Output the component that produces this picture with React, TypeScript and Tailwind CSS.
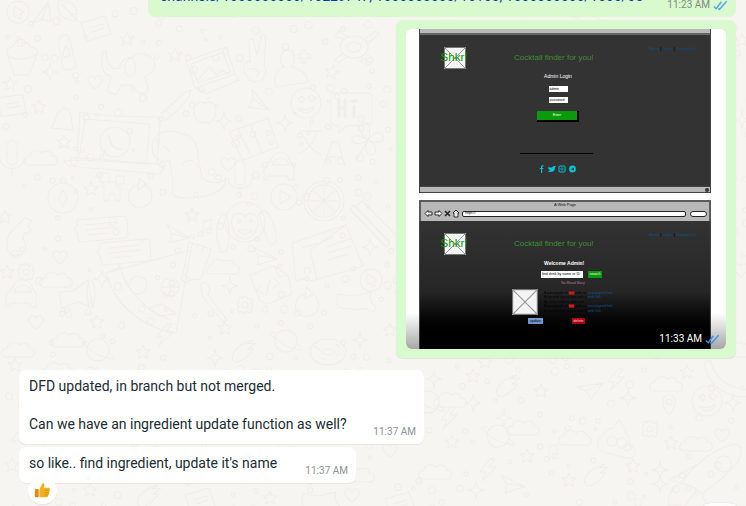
import type { ReactNode } from 'react'

// one doodle per wallpaper motif, drawn around 0,0
const D: Record<string, ReactNode> = {
  star: <path d="M0-7 2-2.2 7-2 3 1.2 4.4 6.2 0 3.4-4.4 6.2-3 1.2-7-2-2-2.2Z" />,
  spark: <path d="M0-9C1-2 2-1 8 0 2 1 1 2 0 9-1 2-2 1-8 0-2-1-1-2 0-9Z" />,
  cloud: <path d="M-14 7C-20 7-20-1-13-2-12-8-4-9-1-5 3-9 10-6 9-2 16-2 16 7 10 7Z" />,
  heart: <path d="M0 7C-10 0-8-7-3-6-1-6 0-4 0-3 0-4 1-6 3-6 8-7 10 0 0 7Z" />,
  send: <path d="M-13-3 13-7 1 9-4 1ZM-4 1 13-7" />,
  bolt: <path d="M2-11-8 2-2 2-6 11 8-3 1-3 7-11Z" />,
  music: <path d="M-3 6V-6L5-9V3M-3 6A2.5 2.5 0 1 1-8 6 2.5 2.5 0 0 1-3 6ZM5 3A2.5 2.5 0 1 1 0 3 2.5 2.5 0 0 1 5 3Z" />,
  chat: <path d="M-25-9 21-13Q25-13 25-9L26 5Q26 9 22 9L-20 13Q-24 13-24 9L-25 3-28 0-25-3ZM-17-4 15-7M-16 1 16-2M-15 6 8 4" />,
  card: <path d="M-15-5 9-12 15 6-9 13ZM-6 0 7-4M-4 4 8 0" />,
  gear: <path d="M-2-8H2L3-5 6-7 8-4 6-2 8 0V2L6 3 7 6 4 8 2 6 0 8H-2L-3 6-6 7-8 4-6 2-8 0-8-2-6-3-7-6-4-8-2-6ZM3 0A3 3 0 1 1-3 0 3 3 0 0 1 3 0Z" />,
  planet: <g><circle r="11" /><path d="M-11-3C-19-8-17-11-11-8M11 3C19 8 17 11 11 8M-11-3C-4 5 4 7 11 8" /></g>,
  comet: <path d="M-12 10C-15 3-5-7 8-10L2-6 11-7 3-1 9-1C2 8-8 15-12 10Z" />,
  pin: <path d="M0 11C-9 1-8-9 0-9 8-9 9 1 0 11ZM3-2A3 3 0 1 1-3-2 3 3 0 0 1 3-2Z" />,
  smile: <g><circle r="15" /><path d="M-8-4-4-7-1-4-4 0ZM2-5 6-8 10-5 6-1ZM-7 5C-2 8 4 7 8 3 7 11-5 12-7 5Z" /></g>,
  play: <g><circle r="13" /><path d="M-4-7 7 0-4 7Z" /></g>,
  cursor: <g><circle r="11" /><path d="M-4-6 6 0 2 2 4 6 1 7-1 3-4 5Z" /></g>,
  leaf: <path d="M-10-9C5-11 12-2 7 11-6 10-12 2-10-9ZM-7-6 11 12M-2-1V-7M3 4H9" />,
  cupcake: <path d="M-14 0-8 19H7L15-2C17-6 12-10 8-9 7-14 2-14 0-12-1-19-3-20-4-20-3-14-8-13-10-9-15-9-16-3-14 0ZM-14 0C-5 5 6 4 15-2" />,
  bottle: <path d="M-7-9-3-15 2-15 5-10 11 17Q5 21-2 19ZM1-4C6 3 5 7 1 7-3 7-3 3 1-4Z" />,
  dog: <path d="M-27-22C-30-8-27 3-19 3L-22 16Q-22 22-13 21L-9 12H2L8 20Q20 21 18 15L15 3C22 1 27-6 24-12 18-20 8-22 2-15-4-18-10-10-11-5-16-3-23-4-24-22ZM0-15C-8-10-6 4 0 3 8 1 6-14 0-15Z" />,
  photo: <g><path d="M-24-6 16-20 25 7-15 21Z" /><path d="M-19-3 13-15 20 5-12 16ZM-12 13-1 0 7 8 12 3 19 7M9-9A3 3 0 1 1 3-9 3 3 0 0 1 9-9Z" /><path d="M-14 21-4 27 29 13 25 7" /></g>,
  peace: <path d="M-9 2-10-18C-10-23-5-22-5-18L-2-5 2-23C3-27 7-26 7-22L5 5C9 12 5 22-3 22-10 22-15 15-15 7-15 2-10 0-9 2ZM-9 9C-5 8-2 9 0 12-1 15-2 16-2 17" />,
  person: <path d="M-12 19C-16 5-8-1-3-1-10-5-8-18 0-18 8-18 8-5 3-1 10 0 20 5 20 14ZM11-14H14V-18H18V-14H23V-10H18V-5H14V-10H11Z" />,
  turtle: <g><ellipse rx="14" ry="11" /><ellipse rx="7" ry="5" /><path d="M12-9 22-16 25-13 14-4M12 7 20 12 17 16 7 10M-12 7-19 12-16 16-6 10M-11-8-19-11-15-16-6-10" /></g>,
  hi: <g><path d="M-21-15 15-15Q20-15 20-10V12Q20 17 15 17L-6 18-13 25-13 18Q-21 18-21 12Z" /><path d="M-13-8V9M-7-8V9M-13 0H-7M2-2V9M-1-7H5" strokeWidth="3" /></g>,
  pencil: <path d="M-15 9-5 0 9-13 15-15 13-8 2 5-10 15ZM-11 4-6 10" />,
  apple: <path d="M0-6C-4-10-12-7-11 3-9 13-3 14 0 12 3 14 9 13 11 3 12-7 4-10 0-6ZM0-6C0-10 3-12 6-13" />,
  map: <path d="M-24-5 15-19 25 10-10 23-14 15ZM-15-8-3 17M-3-13 9 15M3-3A3 3 0 1 1-3-3 3 3 0 0 1 3-3Z" />,
  bell: <path d="M-11 8C-5 2-7-10 2-12 11-11 9 2 11 10ZM-11 8 11 10M2-12V-15" />,
  laptop: <g><path d="M-34-30-3-26 41-25Q47-25 46-18L43 22 M-34-30-37 18" /><path d="M-29-23 36-18 32 21-35 16Z" /><path d="M-50 19-37 18 43 22 50 25 46 32-46 24Z" /><circle cx="1" cy="0" r="15" /><path d="M-11 15-9 7" /><path d="M-5-6C-4 4 2 8 7 7" strokeWidth="2" /></g>,
  dino: <path d="M-18 32C-15 20-20 10-20 0-30 4-38-2-38-14-38-28-20-32-8-26 0-26 8-18 8-4L12 18C24 26 32 22 36 18 36 32 18 38-2 38-14 38-18 36-18 32ZM-26-14-20-8M-8 4C0-4 8 4 8 8" />,
  car: <path d="M-14 6C-16-3-8-4-6-10-3-17 8-17 11-10 13-4 18-3 16 6V12H11L9 8H-9L-11 12H-14ZM-6-3H11C9-12-2-12-6-3Z" />,
  xa: <path d="M-18-14H4M-8-20V-14M-2-14C-3-3-9 4-18 8M-14-8C-10 0-3 7 3 10M5 22 14-3 20-3 27 20M9 12H24" />,
  clover: <path d="M0 0C-8-6-12-16-4-17 2-18 3-10 0 0 5-8 12-10 15-4 18 2 8 4 0 0 8 3 10 12 4 15-2 17-4 8 0 0-6 4-14 6-16 0-18-5-8-6 0 0ZM0 0 -12 20" />,
  mic: <path d="M-5-16Q0-24 5-16V2Q0 8-5 2ZM-12-2C-12 12 12 12 12-2M0 8V17" />,
  compass: <g><circle r="15" /><path d="M-3-18H3M0-8 4 0 0 9-4 0Z" /><circle cy="-18" r="3" /></g>,
  puzzle: <path d="M-12-18H-3V-9H-12ZM4-15H12V-7H4ZM-9-9H4V-4H8V10H3V3H-3V10H-8V-3H-9Z" />,
  redo: <path d="M-1-10C-12-9-14 4-8 10-1 15 11 12 12 1 12-5 8-9 5-10M-1-17 6-11-2-5Z" />,
  citrus: <g><circle r="20" /><circle r="16" /><path d="M0-14V14M-14 0H14M-10-10 10 10M-10 10 10-10" /></g>,
  monkey: <g><circle r="20" /><path d="M-22-8C-30 0-30 16-24 30L-19 30C-14 20-16 0-19-8ZM19-12C26-8 32 8 31 20L26 24C20 14 17 2 14-8ZM-13-4C-10-10 -2-10 0-5 3-11 13-9 13-1 14 7 8 16 0 17-9 17-15 6-13-4ZM-7 9C-2 13 3 13 7 9-1 7-4 7-7 9Z" /><circle cx="-6" cy="-1" r="1.5" /><circle cx="6" cy="-1" r="1.5" /></g>,
  book: <g><path d="M-34-10 20-28 37 13-14 28-20 25-30 28ZM-9 26-16-3 20-28" /><path d="M-24-5-8-10M-2-12 8-16M0-6 24-14M1 0 26-7M3 7 21 1" /></g>,
  key: <path d="M-6-6 5-18 11-14 8-8 11-6 8-2 5-2 3 2 6 13C8 20-8 24-12 16-14 8-14 0-6-6Z" />,
  tube: <path d="M-8-21 14-14 4 16-6 17-14 11ZM-6-15-4-20M-1-14 1-19M5-12 7-17M-14 11-16 16-11 20-6 17" />,
  pizza: <g><path d="M-44-17C-36 14-8 38 26 43L41-40ZM-44-17-30-23C-25-4-8 20 20 30" /><circle cx="-12" cy="-5" r="9" /><circle cx="20" cy="-3" r="9" /><path d="M-2 18 12 14 26 24 10 26Z" /><path d="M12-3 28-3M20-11V5" /></g>,
  brush: <path d="M-13-18C-3-16-5-8-7-5L12 20 8 22-12-3C-12-3-15-12-13-18Z" />,
  code: <path d="M-18-10 6-19 20-10 24 9 0 19-8 16ZM6-19 12-8 20-10M-7 0-11 5-5 8M7-6 11-1 5 3M2-6-2 10" />,
  mega: <g><path d="M-16-8-2-9 13-20 18 8 3 2-13 8ZM-11 8-8 18-3 17-6 6" /><ellipse cx="16" cy="-6" rx="4" ry="14" /></g>,
  poop: <g><path d="M3-18C8-12 10-8 9-6 14-2 15 3 13 6 22 10 21 22 10 20L-12 14C-22 10-18-2-12-3-12-8-6-10-2-10-2-14 1-15 3-18Z" /><circle cx="-4" cy="3" r="5" /><circle cx="6" cy="5" r="5" /></g>,
  rocket: <path d="M-16 12C-2-8 18-22 36-26 46-26 44-14 38-6 30 4 18 14 4 24L-6 16-28 10 0-6M4 24 10 38M-16 12C-26 18-30 24-30 36-24 34-18 34-14 38-10 28-4 26-2 20M26-14A8 8 0 1 1 25-14" />,
  banana: <path d="M-20-20C-16-4-6 8 20 10 22 14 18 16 14 17-8 16-24 2-26-18Z" />,
  tie: <path d="M-16-6-2-4 16-8C14-2 16 4 20 6 22 10 18 13 14 10 8 6 0 12-8 8-14 10-22 6-16-6Z" />,
  wand: <path d="M-20-16-16-20 20 18 16 22ZM-12-20-8-24 26 10" />,
  donut: <g><ellipse rx="18" ry="13" /><ellipse rx="6" ry="3" /><path d="M-14-6-8-2M8-8 12-4M-6 6-2 8M8 4 12 2" /></g>,
}

const PLACED: [string, number, number, number?, number?][] = [
  ['cursor', 18, 12], ['send', 44, 16, -45], ['leaf', 68, 10], ['card', 96, 28], ['star', 127, 39],
  ['cupcake', 22, 56], ['bottle', 65, 50], ['dog', 130, 73], ['photo', 210, 67], ['peace', 259, 60],
  ['person', 288, 68], ['turtle', 354, 47], ['spark', 50, 72], ['star', 175, 55], ['star', 332, 72, 12],
  ['star', 10, 84], ['heart', 95, 82], ['card', 12, 105, 8], ['star', 39, 107], ['pencil', 176, 105],
  ['apple', 205, 110], ['send', 256, 102, 60], ['smile', 306, 103], ['hi', 352, 108], ['bell', 62, 120],
  ['laptop', 114, 142], ['dino', 190, 160], ['map', 253, 137], ['spark', 224, 121], ['spark', 285, 123],
  ['star', 64, 142], ['mic', 12, 160], ['cloud', 43, 158], ['heart', 228, 164], ['car', 278, 168],
  ['xa', 318, 145], ['clover', 368, 140], ['mic', 240, 180], ['compass', 63, 198], ['star', 91, 189],
  ['puzzle', 112, 191], ['redo', 140, 195], ['play', 284, 197], ['citrus', 324, 201], ['monkey', 245, 222],
  ['star', 192, 215], ['key', 20, 235], ['star', 5, 217], ['chat', 102, 229], ['chat', 125, 252],
  ['send', 175, 235, 40], ['music', 206, 228], ['book', 326, 253], ['wand', 370, 225], ['spark', 370, 247],
  ['heart', 60, 257], ['gear', 26, 272], ['star', 7, 272], ['tube', 197, 263], ['cloud', 225, 267],
  ['send', 262, 257, 35], ['cursor', 371, 280], ['cloud', 58, 280], ['spark', 102, 279], ['pizza', 150, 290],
  ['code', 268, 285], ['spark', 230, 286], ['car', 20, 295], ['mega', 75, 300], ['brush', 215, 300],
  ['gear', 245, 305], ['redo', 307, 304], ['tie', 355, 300], ['heart', 36, 322], ['star', 97, 322],
  ['star', 225, 328], ['cloud', 70, 340], ['bolt', 165, 335], ['planet', 286, 341], ['spark', 360, 340],
  ['donut', 328, 352], ['cloud', 20, 350], ['planet', 98, 350], ['star', 143, 352], ['spark', 215, 358],
  ['comet', 245, 350], ['star', 390, 330], ['star', 485, 362], ['comet', 509, 385], ['spark', 434, 379],
  ['star', 473, 376], ['star', 541, 391], ['send', 590, 390], ['bolt', 616, 380], ['spark', 628, 398],
  ['cloud', 668, 384], ['star', 687, 372], ['banana', 730, 380], ['planet', 428, 402], ['cloud', 452, 400],
  ['bolt', 449, 418], ['spark', 473, 403], ['spark', 504, 418], ['star', 452, 442], ['planet', 498, 436],
  ['cloud', 525, 428], ['cloud', 577, 438], ['poop', 616, 438], ['gear', 650, 429], ['pin', 669, 404],
  ['smile', 707, 401], ['spark', 733, 403], ['star', 671, 443], ['cloud', 698, 444], ['heart', 722, 435],
  ['music', 552, 453], ['star', 527, 456], ['cloud', 437, 472], ['bolt', 488, 470], ['send', 510, 485, 35],
  ['spark', 476, 490], ['star', 569, 480], ['comet', 597, 474], ['star', 633, 466], ['rocket', 698, 470],
  ['spark', 660, 470], ['spark', 660, 484], ['card', 400, 504], ['cloud', 60, 370], ['star', 412, 350],
  ['heart', 390, 450], ['cloud', 360, 475], ['banana', 385, 392], ['star', 15, 365], ['star', 12, 465],
  ['car', 30, 440, 40], ['comet', 150, 495], ['star', 270, 498], ['card', 200, 500], ['heart', 352, 495],
  ['tie', 320, 500], ['star', 90, 490], ['cloud', 745, 350], ['spark', 742, 120], ['star', 742, 40], ['heart', 741, 270],
]

// small dots filling the gaps between doodles
function dots() {
  const out: [number, number, number][] = []
  let seed = 7
  const rnd = () => (seed = (seed * 16807) % 2147483647) / 2147483647
  for (let y = 6; y < 506; y += 15) {
    for (let x = 6; x < 746; x += 15) {
      if (rnd() > 0.45) continue
      const px = x + rnd() * 11
      const py = y + rnd() * 11
      if (PLACED.some(([, dx, dy]) => Math.hypot(dx - px, dy - py) < 13)) continue
      out.push([px, py, 1.4 + rnd() * 2.4])
    }
  }
  return out
}

function Wallpaper() {
  return (
    <svg className="absolute inset-0" width="746" height="506" fill="none" stroke="#f0eeea" strokeWidth="1.1" strokeLinejoin="round" strokeLinecap="round">
      {dots().map(([x, y, r], i) => <circle key={i} cx={x} cy={y} r={r} />)}
      {PLACED.map(([name, x, y, rot], i) => (
        <g key={i} transform={`translate(${x} ${y}) rotate(${rot ?? 0})`}>{D[name]}</g>
      ))}
    </svg>
  )
}

function Checks({ className }: { className: string }) {
  return (
    <svg width="15" height="11" viewBox="0 0 16 11" fill="none" stroke="currentColor" strokeWidth="1.5" className={className}>
      <path d="M1 6.5 3.4 9 9 1.5M5.5 8.5 7 9.5 14.5 1" />
    </svg>
  )
}

function Broken({ className }: { className: string }) {
  return (
    <svg viewBox="0 0 22 22" className={className}>
      <rect x="0.5" y="0.5" width="21" height="21" fill="#f4f4f4" stroke="#777" />
      <path d="M0 0 22 22M22 0 0 22" stroke="#999" strokeWidth="1" />
    </svg>
  )
}

function Header({ top }: { top: string }) {
  return (
    <div className={`flex items-start ${top}`}>
      <div className="relative ml-[24px] flex h-[22px] w-[22px] shrink-0 items-center justify-center">
        <Broken className="absolute inset-0 h-[22px] w-[22px]" />
        <span className="relative -ml-[2px] shrink-0 whitespace-nowrap text-[11.5px] leading-none text-[#0a9a0a]">Shkr!</span>
      </div>
      <span className="ml-[48px] mt-[6px] w-[82px] whitespace-nowrap text-[8px] leading-[10px] text-[#3f8f35]">Cocktail finder for you!</span>
      <span className="ml-[53px] mt-[-1px] whitespace-nowrap text-[4px] leading-[6px] text-[#12508f]">Menu <b className="text-black">|</b> Order <b className="text-black">|</b> Contact Us</span>
    </div>
  )
}

function Chrome() {
  return (
    <div className="flex h-[21px] flex-col border-2 border-b-0 border-[#5b5b5b] bg-[#b8b8b8]">
      <span className="text-center text-[4px] leading-[6px] text-[#111]">A Web Page</span>
      <div className="flex items-center pl-[3px] pr-[2px] pt-[1px]">
        <svg width="37" height="9" viewBox="0 0 37 9" fill="#eee" stroke="#222" strokeWidth="0.9">
          <path d="M1 4.5 4 1.5V3H8V6H4V7.5ZM18 4.5 15 1.5V3H11V6H15V7.5Z" />
          <path d="M21 2 26 7M26 2 21 7" strokeWidth="1.5" />
          <path d="M29 4 32 1 35 4 34 4V8H30V4Z" />
        </svg>
        <div className="ml-[1px] flex h-[6px] w-[224px] items-center rounded-[2px] border border-[#222] bg-white pl-[2px] text-[3.5px] leading-none text-black">https://</div>
        <div className="ml-[4px] h-[6px] w-[17px] rounded-full border border-[#222] bg-white" />
      </div>
    </div>
  )
}

function Result() {
  return (
    <div className="mt-[3px] flex pl-[92px]">
      <Broken className="h-[26px] w-[26px] shrink-0" />
      <div className="ml-[6px] mt-[2px] whitespace-nowrap text-[3.6px] leading-[4.4px] text-black">
        <p>A paragraph of <span className="bg-[#a01010] text-[#e04040]">text</span> with an <span className="text-[#12508f]">unassigned link</span></p>
        <p>A second row of text with a <span className="text-[#12508f]">web link</span></p>
        <p>An icon ▪ inlines with text.</p>
        <p>A paragraph of <span className="bg-[#a01010] text-[#e04040]">text</span> with an <span className="text-[#12508f]">unassigned link</span></p>
        <p>A second row of text with a <span className="text-[#12508f]">web link</span></p>
      </div>
    </div>
  )
}

function ImageBubble() {
  return (
    <div className="mt-[3px] h-[338px] w-[340px] self-end rounded-[7px] bg-[#d9f9cf] p-[9px] pl-[10px] pr-[10px] shadow-[0_1px_1px_rgba(0,0,0,0.08)]">
      <div className="relative flex h-[320px] flex-col gap-[7px] overflow-hidden rounded-[6px] bg-white px-[13px] pr-[15px] font-['Liberation_Sans',sans-serif]">
        {/* first wireframe */}
        <div className="flex h-[164px] shrink-0 flex-col border-x border-[#444]">
          <div className="h-[6px] border-b-2 border-[#666] bg-[#b8b8b8]" />
          <div className="h-[151px] bg-[#333]">
            <Header top="pt-[12px]" />
            <div className="flex w-[276px] flex-col items-center">
              <span className="mt-[3px] text-[5px] leading-[8px] text-white">Admin Login</span>
              <div className="mt-[6px] h-[6px] w-[19px] bg-white pl-[1px] text-[3.5px] leading-[6px] text-black">admin</div>
              <div className="mt-[5px] h-[6px] w-[19px] bg-white pl-[1px] text-[3.5px] leading-[6px] text-black">password</div>
              <div className="mt-[8px] flex h-[11px] w-[42px] items-center justify-center border-b-2 border-r-2 border-black bg-[#0a9a0a] text-[3.5px] text-white">Enter</div>
              <div className="-ml-[3px] mt-[31px] h-px w-[73px] bg-black" />
              <div className="mt-[11px] flex items-center text-[#07c4d8]">
                <svg width="38" height="8" viewBox="0 0 38 8" fill="currentColor">
                  <path d="M2 8V4H0.8V3H2V1.8Q2 0 4.4 0V1.2Q3.2 1.2 3.2 2V3H4.4L4.2 4H3.2V8Z" />
                  <path d="M9 2Q12 3 13.5 2 14.5 0.5 16 1L17 1 16 2.5Q16 7 11 7 9.5 7 8.5 6 10 6 11 5.4 9 4.4 9 2Z" />
                  <rect x="20" y="1" width="6" height="6" rx="1" fill="none" stroke="currentColor" />
                  <circle cx="23" cy="4" r="1.2" fill="none" stroke="currentColor" strokeWidth="0.7" />
                  <circle cx="33.5" cy="4" r="3.4" />
                  <path d="M31.8 4 35.2 2.8 34.6 5.4Z" fill="#333" />
                </svg>
              </div>
            </div>
          </div>
          <div className="flex h-[7px] items-center justify-end border-y border-[#444] bg-[#b8b8b8] pr-[1px]">
            <span className="h-[4px] w-[4px] rounded-full bg-[#333]" />
          </div>
        </div>
        {/* second wireframe */}
        <div className="flex h-[149px] shrink-0 flex-col">
          <Chrome />
          <div className="flex-1 border-x border-[#444] bg-gradient-to-b from-[#333] via-[#262626] via-55% to-black to-95%">
            <Header top="pt-[12px]" />
            <div className="mt-[4px] pl-[124px] text-[5px] font-semibold leading-[8px] text-white">Welcome Admin!</div>
            <div className="mt-[4px] flex items-center pl-[121px]">
              <div className="h-[7px] w-[42px] bg-white pl-[1px] text-[3.6px] leading-[7px] text-black">find drink by name or ID</div>
              <div className="ml-[5px] h-[7px] w-[14px] bg-[#0a9a0a] text-center text-[3.6px] leading-[7px] text-white">search</div>
            </div>
            <div className="mt-[2px] pl-[141px] text-[3.6px] leading-[6px] text-[#a97f9a]">No Blood Mary</div>
            <Result />
            <div className="mt-[3px] flex pl-[108px]">
              <div className="h-[6px] w-[15px] bg-[#7ba6e0] text-center text-[3.6px] leading-[6px] text-black">update</div>
              <div className="ml-[29px] h-[6px] w-[13px] bg-[#c00010] text-center text-[3.6px] leading-[6px] text-[#eee]">delete</div>
            </div>
          </div>
        </div>
        {/* scrim and stamp sit on top of the picture */}
        <div className="absolute inset-x-0 bottom-0 h-[36px] bg-gradient-to-b from-transparent to-black/35" />
        <div className="absolute bottom-[3px] right-[6px] flex items-center gap-[3px] font-['Roboto',sans-serif] text-[10px] leading-[14px] text-white">
          11:33 AM
          <Checks className="text-[#3f93e6]" />
        </div>
      </div>
    </div>
  )
}

function Bubble({ width, time, children }: { width: string; time: string; children: ReactNode }) {
  return (
    <div className={`relative rounded-[7px] bg-white pb-[10px] pl-[10px] pt-[7px] text-[14px] leading-[19px] text-[#202c33] shadow-[0_1px_1px_rgba(0,0,0,0.06)] ${width}`}>
      {children}
      <span className="absolute bottom-[5px] right-[8px] text-[10px] leading-[14px] text-[#8b9296]">{time}</span>
    </div>
  )
}

export default function App() {
  return (
    <div className="relative h-[506px] w-[746px] overflow-hidden bg-[#f7f5f2] font-['Roboto',sans-serif]">
      <Wallpaper />
      <div className="relative flex h-full flex-col pl-[19px] pr-[10px]">
        <div className="relative h-[17px] w-[588px] shrink-0 self-end overflow-hidden rounded-b-[7px] bg-[#d9f9cf] pl-[12px]">
          <p className="-mt-[13px] whitespace-nowrap text-[14px] leading-[19px] text-[#0a3ea6]">channels/1000000000/10229747, 1000000000/10100, 1000000000/1000/05</p>
          <div className="absolute bottom-[5px] right-[8px] flex items-center gap-[3px] text-[10px] leading-[14px] text-[#7e8a7e]">
            11:23 AM
            <Checks className="text-[#53a6e8]" />
          </div>
        </div>
        <ImageBubble />
        <div className="mt-[12px] flex flex-col gap-[3px]">
          <Bubble width="w-[405px]" time="11:37 AM">
            <p>DFD updated, in branch but not merged.</p>
            <p className="mt-[19px]">Can we have an ingredient update function as well?</p>
          </Bubble>
          <div className="relative w-[337px]">
            <Bubble width="w-full" time="11:37 AM">
              <p>so like.. find ingredient, update it's name</p>
            </Bubble>
            <div className="absolute left-[9px] top-[30px] flex h-[27px] w-[29px] items-center justify-center rounded-full bg-white shadow-[0_1px_1px_rgba(0,0,0,0.08)]">
              <svg width="17" height="17" viewBox="0 0 16 16">
                <path d="M5 7 7.8 1.5C8.3.7 9.8 1 9.8 2.4L9.4 5.5H13.8C15.2 5.5 15.4 7.2 14.4 7.8 15.2 8.4 15 9.8 14 10.1 14.6 10.8 14.2 12 13.3 12.2 13.6 13 13.1 14.4 12 14.4H7.5C6 14.4 5 13.6 5 13.6Z" fill="#f3b01e" />
                <path d="M10 7.8H14.4M10 10.1H14M10 12.2H13.3" stroke="#d8890f" strokeWidth="0.7" />
                <rect x="0.8" y="6.6" width="3.6" height="7.8" rx="0.8" fill="#e08a12" />
              </svg>
            </div>
          </div>
        </div>
      </div>
      <div className="absolute bottom-[-26px] right-[3px] h-[30px] w-[46px] rounded-full border border-[#ececec] bg-white/80" />
    </div>
  )
}
